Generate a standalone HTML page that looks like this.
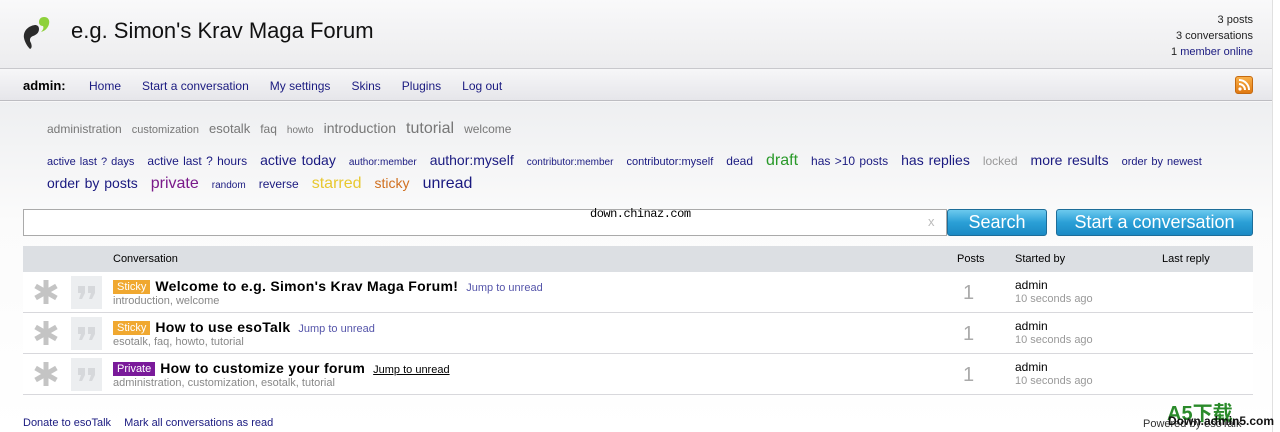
<!DOCTYPE html>
<html><head><meta charset="utf-8"><style>
*{margin:0;padding:0;box-sizing:border-box}
body{width:1280px;height:432px;overflow:hidden;font-family:"Liberation Sans",Arial,sans-serif;background:#f7f7f8;position:relative;font-size:12px;color:#000}
.a{position:absolute;white-space:nowrap}
a{color:#1a1a80;text-decoration:none}
#hdr{position:absolute;left:0;top:0;width:1272px;height:69px;background:linear-gradient(#f9f9fa,#ececee);border-bottom:1px solid #c8c8cc}
#nav{position:absolute;left:0;top:70px;width:1272px;height:31px;background:linear-gradient(#f6f6f8,#e6e6ea);border-bottom:1px solid #bdbdc2}
#body{position:absolute;left:0;top:102px;width:1272px;height:330px;background:linear-gradient(#eeeff1,#fbfbfb 120px,#fff)}
.btn{position:absolute;height:27px;border:1px solid #1d6d99;border-radius:3px;background:linear-gradient(#6cc9ee,#2a9fd6 50%,#1b8ac4);color:#fff;font-size:18px;text-align:center;line-height:25px}
.row{position:absolute;left:23px;width:1230px;height:41px;border-bottom:1px solid #d8d8dc;background:#fff}
.star{position:absolute;left:11px;top:8px}
.av{position:absolute;left:48px;top:4px;width:31px;height:33px;background:#eceef0}
.lbl{display:inline-block;color:#fff;font-size:11px;padding:0 4px;height:14px;line-height:14px;margin-right:5px;vertical-align:1px}
.tt{font-size:14px;font-weight:bold;letter-spacing:0.3px}
.ju{font-size:11px;color:#5555aa;margin-left:8px}
.tg{position:absolute;left:90px;top:23px;font-size:11px;color:#888}
.pc{position:absolute;left:940px;top:10px;font-size:20px;color:#aaa}
.sb{position:absolute;left:992px;top:6px;font-size:12px}
.sb i{display:block;font-style:normal;font-size:11px;color:#999;margin-top:1px}
</style></head><body>
<div id="hdr"></div>
<div id="nav"></div>
<div id="body"></div>
<div style="position:absolute;left:1272px;top:0;width:8px;height:432px;background:#fff;border-left:1px solid #e0e0e0"></div>
<svg class="a" style="left:20px;top:16px" width="32" height="34" viewBox="0 0 32 34"><path d="M15 9c-7 1-12 6-11 13 1 5 4 9 6 11 2-1 2-3 1-6-2-3-1-6 2-7 3-1 6-3 6-7 0-3-2-4-4-4z" fill="#2b2b2b"/><path d="M24 1c4 0 6 3 5 7-1 4-4 7-8 8 2-2 3-4 2-6-3 0-4-2-4-4 0-3 2-5 5-5z" fill="#8ed13b"/></svg>
<div class="a" style="left:71px;top:18px;font-size:22px;color:#111">e.g. Simon's Krav Maga Forum</div>
<div class="a" style="right:27px;top:12px;text-align:right;font-size:11px;line-height:16px;color:#222">3 posts<br>3 conversations<br>1 <a>member online</a></div>
<div class="a" style="left:23px;top:78px;font-size:13px;font-weight:bold">admin:</div>
<div class="a" style="left:89px;top:79px;font-size:12px"><a>Home</a><a style="margin-left:21px">Start a conversation</a><a style="margin-left:21px">My settings</a><a style="margin-left:21px">Skins</a><a style="margin-left:21px">Plugins</a><a style="margin-left:21px">Log out</a></div>
<div class="a" style="left:1235px;top:76px;width:18px;height:18px;border-radius:3px;background:linear-gradient(#f9b04a,#e07810);border:1px solid #c56a10"><svg width="16" height="16" viewBox="0 0 16 16"><circle cx="4" cy="12" r="1.6" fill="#fff"/><path d="M3 7a6 6 0 0 1 6 6M3 3a10 10 0 0 1 10 10" stroke="#fff" stroke-width="2" fill="none"/></svg></div>
<div class="a" style="left:47px;top:118px;color:#777;line-height:20px"><span style="font-size:12px">administration</span>&nbsp;&nbsp; <span style="font-size:11px">customization</span>&nbsp;&nbsp; <span style="font-size:13px">esotalk</span>&nbsp;&nbsp; <span style="font-size:12px">faq</span>&nbsp;&nbsp; <span style="font-size:10px">howto</span>&nbsp;&nbsp; <span style="font-size:14px">introduction</span>&nbsp;&nbsp; <span style="font-size:16px">tutorial</span>&nbsp;&nbsp; <span style="font-size:12px">welcome</span></div>
<div class="a" style="left:47px;top:150px;width:1200px;white-space:normal;line-height:20px;color:#1a1a80;word-spacing:1px">
<span style="font-size:11px">active last ? days</span>&nbsp;&nbsp; <span style="font-size:12px">active last ? hours</span>&nbsp;&nbsp; <span style="font-size:14px">active today</span>&nbsp;&nbsp; <span style="font-size:10px">author:member</span>&nbsp;&nbsp; <span style="font-size:14px">author:myself</span>&nbsp;&nbsp; <span style="font-size:10px">contributor:member</span>&nbsp;&nbsp; <span style="font-size:11px">contributor:myself</span>&nbsp;&nbsp; <span style="font-size:12px">dead</span>&nbsp;&nbsp; <span style="font-size:16px;color:#2a9a2a">draft</span>&nbsp;&nbsp; <span style="font-size:12px">has &gt;10 posts</span>&nbsp;&nbsp; <span style="font-size:14px">has replies</span>&nbsp;&nbsp; <span style="font-size:12px;color:#999">locked</span>&nbsp;&nbsp; <span style="font-size:14px">more results</span>&nbsp;&nbsp; <span style="font-size:11px">order by newest</span><br>
<span style="font-size:14px">order by posts</span>&nbsp;&nbsp; <span style="font-size:16px;color:#7a1a8a">private</span>&nbsp;&nbsp; <span style="font-size:10px">random</span>&nbsp;&nbsp; <span style="font-size:12px">reverse</span>&nbsp;&nbsp; <span style="font-size:16px;color:#e8c830">starred</span>&nbsp;&nbsp; <span style="font-size:14px;color:#d07020">sticky</span>&nbsp;&nbsp; <span style="font-size:16px">unread</span></div>
<div class="a" style="left:23px;top:209px;width:924px;height:27px;background:#fff;border:1px solid #aaa"></div>
<div class="a" style="left:590px;top:207px;font-size:12px;font-family:'Liberation Mono',monospace;letter-spacing:-0.5px">down.chinaz.com</div>
<div class="a" style="left:928px;top:214px;font-size:13px;color:#bbb">x</div>
<div class="btn" style="left:947px;top:209px;width:100px">Search</div>
<div class="btn" style="left:1056px;top:209px;width:197px">Start a conversation</div>
<div class="a" style="left:23px;top:246px;width:1230px;height:26px;background:#dcdfe3"></div>
<div class="a" style="left:113px;top:253px;font-size:11px">Conversation</div>
<div class="a" style="left:957px;top:253px;font-size:11px">Posts</div>
<div class="a" style="left:1015px;top:253px;font-size:11px">Started by</div>
<div class="a" style="left:1162px;top:253px;font-size:11px">Last reply</div>
<div class="row" style="top:272px"><svg class="star" width="24" height="24" viewBox="0 0 24 24"><g stroke="#c4c4c4" stroke-width="5"><path d="M12 0v24M1.6 6l20.8 12M1.6 18l20.8-12"/></g></svg><div class="av"><svg width="31" height="33" viewBox="0 0 31 33"><path d="M7 10h7v7l-3 6h-3l2-6h-3zM17 10h7v7l-3 6h-3l2-6h-3z" fill="#d6d8db"/></svg></div><div class="a" style="left:90px;top:6px"><span class="lbl" style="background:#f0a830">Sticky</span><span class="tt">Welcome to e.g. Simon's Krav Maga Forum!</span><span class="ju">Jump to unread</span></div><div class="tg">introduction, welcome</div><div class="pc">1</div><div class="sb">admin<i>10 seconds ago</i></div></div>
<div class="row" style="top:313px"><svg class="star" width="24" height="24" viewBox="0 0 24 24"><g stroke="#c4c4c4" stroke-width="5"><path d="M12 0v24M1.6 6l20.8 12M1.6 18l20.8-12"/></g></svg><div class="av"><svg width="31" height="33" viewBox="0 0 31 33"><path d="M7 10h7v7l-3 6h-3l2-6h-3zM17 10h7v7l-3 6h-3l2-6h-3z" fill="#d6d8db"/></svg></div><div class="a" style="left:90px;top:6px"><span class="lbl" style="background:#f0a830">Sticky</span><span class="tt">How to use esoTalk</span><span class="ju">Jump to unread</span></div><div class="tg">esotalk, faq, howto, tutorial</div><div class="pc">1</div><div class="sb">admin<i>10 seconds ago</i></div></div>
<div class="row" style="top:354px"><svg class="star" width="24" height="24" viewBox="0 0 24 24"><g stroke="#c4c4c4" stroke-width="5"><path d="M12 0v24M1.6 6l20.8 12M1.6 18l20.8-12"/></g></svg><div class="av"><svg width="31" height="33" viewBox="0 0 31 33"><path d="M7 10h7v7l-3 6h-3l2-6h-3zM17 10h7v7l-3 6h-3l2-6h-3z" fill="#d6d8db"/></svg></div><div class="a" style="left:90px;top:6px"><span class="lbl" style="background:#7a1a9a">Private</span><span class="tt">How to customize your forum</span><span class="ju" style="color:#000;text-decoration:underline">Jump to unread</span></div><div class="tg">administration, customization, esotalk, tutorial</div><div class="pc">1</div><div class="sb">admin<i>10 seconds ago</i></div></div>
<div class="a" style="left:23px;top:417px;font-size:11px"><a>Donate to esoTalk</a><a style="margin-left:13px">Mark all conversations as read</a></div>
<div class="a" style="left:1143px;top:418px;font-size:11px;color:#333">Powered by esoTalk</div>
<div class="a" style="left:1167px;top:397px;font-size:20px;font-weight:bold;color:#2a8a2a;font-family:'Liberation Sans','Noto Sans CJK SC',sans-serif">A5下载</div>
<div class="a" style="left:1168px;top:414px;font-size:12px;font-weight:bold;color:#111">Down.admin5.com</div>
</body></html>
